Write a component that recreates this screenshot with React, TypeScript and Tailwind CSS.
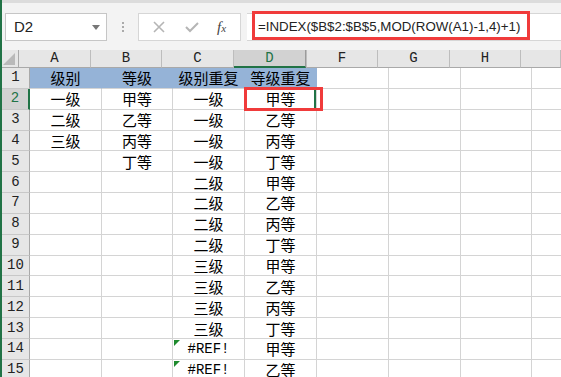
import React from 'react';

const colClasses = ['w-[72px]', 'w-[71px]', 'w-[72px]', 'w-[72px]', 'w-[72px]', 'w-[72px]', 'w-[71px]', 'w-[40px]'];
const letters = ['A', 'B', 'C', 'D', 'F', 'G', 'H', ''];

const rows: string[][] = [
  ['级别', '等级', '级别重复', '等级重复'],
  ['一级', '甲等', '一级', '甲等'],
  ['二级', '乙等', '一级', '乙等'],
  ['三级', '丙等', '一级', '丙等'],
  ['', '丁等', '一级', '丁等'],
  ['', '', '二级', '甲等'],
  ['', '', '二级', '乙等'],
  ['', '', '二级', '丙等'],
  ['', '', '二级', '丁等'],
  ['', '', '三级', '甲等'],
  ['', '', '三级', '乙等'],
  ['', '', '三级', '丙等'],
  ['', '', '三级', '丁等'],
  ['', '', '#REF!', '甲等'],
  ['', '', '#REF!', '乙等'],
];

const cjk = "font-['Noto_Sans_CJK_SC',sans-serif]";
const mono = "font-['Liberation_Mono',monospace]";

function FormulaBar() {
  return (
    <div className="h-[50px] bg-[#f3f3f3] border-t-[3px] border-[#dcdcdc] flex items-start pt-[10px] pl-[3px]">
      {/* name box */}
      <div className="w-[102px] h-[28px] bg-white border border-[#c6c6c6] flex items-center justify-between pl-[8px] pr-[6px]">
        <span className="font-['Liberation_Sans',sans-serif] text-[15px] text-[#222]">D2</span>
        <span className="w-0 h-0 border-l-[4px] border-r-[4px] border-t-[5px] border-l-transparent border-r-transparent border-t-[#777]" />
      </div>
      <div className="w-[31px] h-[28px] flex flex-col items-center justify-center gap-[2px]">
        <span className="w-[2px] h-[2px] bg-[#aaa]" />
        <span className="w-[2px] h-[2px] bg-[#aaa]" />
        <span className="w-[2px] h-[2px] bg-[#aaa]" />
      </div>
      {/* buttons */}
      <div className="w-[103px] h-[28px] bg-white border border-[#d6d6d6] flex items-center">
        <svg width="14" height="14" viewBox="0 0 14 14" className="ml-[13px]">
          <path d="M2 2 L12 12 M12 2 L2 12" stroke="#b5b5b5" strokeWidth="1.6" fill="none" />
        </svg>
        <svg width="16" height="14" viewBox="0 0 16 14" className="ml-[18px]">
          <path d="M2 7 L6 11 L14 3" stroke="#b5b5b5" strokeWidth="2" fill="none" />
        </svg>
        <span className="ml-[17px] font-['Liberation_Serif',serif] italic text-[15px] text-[#444] leading-none">
          f<span className="text-[11px]">x</span>
        </span>
      </div>
      {/* formula input */}
      <div className="ml-[6px] flex-1 h-[28px] bg-white border-y border-[#d6d6d6] relative">
        <div className="absolute left-[5px] -top-[3px] w-[278px] h-[29px] border-[3px] border-[#f03b3b]" />
        <div className="pl-[11px] h-full flex items-center font-['Liberation_Sans',sans-serif] text-[13.3px] text-[#222]">
          =INDEX($B$2:$B$5,MOD(ROW(A1)-1,4)+1)
        </div>
      </div>
    </div>
  );
}

function HeaderRow() {
  return (
    <div className="flex h-[18px] bg-[#f3f3f3]">
      <div className="w-[28px] h-full bg-[#e6e6e6] border-r border-b border-[#a9a9a9] relative">
        <svg width="12" height="12" viewBox="0 0 12 12" className="absolute right-[3px] bottom-[2px]">
          <path d="M12 0 L12 12 L0 12 Z" fill="#b9b9b9" />
        </svg>
      </div>
      {letters.map((l, i) => (
        <div
          key={i}
          className={`${colClasses[i]} shrink-0 h-full flex items-center justify-center border-r ${mono} text-[14px] ${
            l === 'D'
              ? 'bg-[#d2d2d2] text-[#217346] border-b-2 border-b-[#217346] border-r-[#9b9b9b]'
              : 'bg-[#e6e6e6] text-[#222] border-b border-b-[#a9a9a9] border-r-[#bdbdbd]'
          } ${l === 'F' ? 'border-l border-l-[#bdbdbd]' : ''}`}
        >
          {l}
        </div>
      ))}
    </div>
  );
}

function Row({ n, cells }: { n: number; cells: string[] }) {
  const sel = n === 2;
  return (
    <div className="flex h-[20.85px]">
      <div
        className={`w-[28px] shrink-0 h-full flex items-center justify-center border-b border-b-[#c8c8c8] ${mono} text-[14px] ${
          sel ? 'bg-[#d2d2d2] text-[#217346] border-r-2 border-r-[#217346]' : 'bg-[#e6e6e6] text-[#222] border-r border-r-[#a9a9a9]'
        }`}
      >
        {n}
      </div>
      {colClasses.map((w, i) => {
        const text = cells[i] ?? '';
        const blue = n === 1 && i < 4;
        const isRef = text === '#REF!';
        return (
          <div
            key={i}
            className={`${w} shrink-0 h-full relative flex items-center justify-center border-b border-b-[#d4d4d4] border-r ${
              blue ? 'bg-[#95b3d7] border-r-[#95b3d7]' : 'bg-white border-r-[#d4d4d4]'
            } ${isRef ? mono + ' text-[14px]' : cjk + ' text-[15px]'} text-black leading-none`}
          >
            {isRef && (
              <span className="absolute left-[1px] top-[1px] w-0 h-0 border-t-[6px] border-r-[6px] border-t-[#1e8a2e] border-r-transparent" />
            )}
            {text}
            {sel && i === 3 && (
              <>
                <span className="absolute right-[0px] top-[0px] w-[2px] h-[20px] bg-[#217346] z-10" />
                <span className="absolute -left-[1px] -top-[2px] w-[79px] h-[24px] border-[3px] border-[#f03b3b] z-20" />
              </>
            )}
          </div>
        );
      })}
    </div>
  );
}

export default function App() {
  return (
    <div className="w-[561px] h-[377px] overflow-hidden border-l-2 border-[#217346] bg-white">
      <FormulaBar />
      <HeaderRow />
      {rows.map((r, i) => (
        <Row key={i} n={i + 1} cells={r} />
      ))}
    </div>
  );
}
